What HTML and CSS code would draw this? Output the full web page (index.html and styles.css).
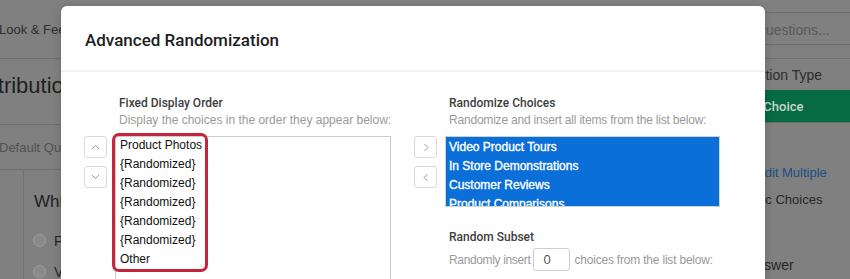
FILE: index.html
```html
<!DOCTYPE html>
<html lang="en">
<head>
<meta charset="utf-8">
<title>Advanced Randomization</title>
<link rel="stylesheet" href="styles.css">
</head>
<body>
<div class="app">
  <div class="bg-left">
    <div class="bl-tab">Look &amp; Feel</div>
    <div class="bl-title">Distribution</div>
    <div class="bl-sub">Default Question</div>
    <div class="bl-body">
      <div class="bl-side">l</div>
      <div class="bl-q">
        <div class="q-text">Which</div>
        <div class="q-opt"><span class="radio"></span>Product</div>
        <div class="q-opt"><span class="radio"></span>Video</div>
      </div>
    </div>
  </div>
  <div class="bg-right">
    <div class="br-top"></div>
    <div class="br-search"><span class="clip q1">Questions...</span></div>
    <div class="br-gap"></div>
    <div class="br-type"><span class="clip q2">Question Type</span></div>
    <div class="br-green"><span class="clip q3">Multiple Choice</span></div>
    <div class="br-edit"><span class="clip q4">Edit Multiple</span></div>
    <div class="br-auto"><span class="clip q5">Automatic Choices</span></div>
    <div class="br-ans"><span class="clip q6">Answer</span></div>
  </div>
</div>

<div class="modal">
  <div class="modal-header">
    <h1 class="modal-title">Advanced Randomization</h1>
  </div>
  <div class="modal-body">
    <section class="col">
      <div class="col-head">
        <h2 class="col-title">Fixed Display Order</h2>
        <p class="col-desc">Display the choices in the order they appear below:</p>
      </div>
      <div class="btns">
        <button class="btn" aria-label="Move up"><svg width="9" height="6" viewBox="0 0 9 6"><path d="M1 5 L4.5 1.5 L8 5" fill="none" stroke="#9a9a9a" stroke-width="1"/></svg></button>
        <button class="btn" aria-label="Move down"><svg width="9" height="6" viewBox="0 0 9 6"><path d="M1 1 L4.5 4.5 L8 1" fill="none" stroke="#9a9a9a" stroke-width="1"/></svg></button>
      </div>
      <div class="list list-fixed">
        <div class="highlight">
          <div class="item">Product Photos</div>
          <div class="item">{Randomized}</div>
          <div class="item">{Randomized}</div>
          <div class="item">{Randomized}</div>
          <div class="item">{Randomized}</div>
          <div class="item">{Randomized}</div>
          <div class="item">Other</div>
        </div>
      </div>
    </section>
    <section class="col col-right">
      <div class="col-head">
        <h2 class="col-title">Randomize Choices</h2>
        <p class="col-desc">Randomize and insert all items from the list below:</p>
      </div>
      <div class="btns">
        <button class="btn" aria-label="Move right"><svg width="6" height="9" viewBox="0 0 6 9"><path d="M1.5 1 L5 4.5 L1.5 8" fill="none" stroke="#9a9a9a" stroke-width="1"/></svg></button>
        <button class="btn" aria-label="Move left"><svg width="6" height="9" viewBox="0 0 6 9"><path d="M4.5 1 L1 4.5 L4.5 8" fill="none" stroke="#9a9a9a" stroke-width="1"/></svg></button>
      </div>
      <div class="right-stack">
        <div class="list list-rand">
          <div class="item sel">Video Product Tours</div>
          <div class="item sel">In Store Demonstrations</div>
          <div class="item sel">Customer Reviews</div>
          <div class="item sel">Product Comparisons</div>
        </div>
        <h2 class="col-title subset-title">Random Subset</h2>
        <p class="subset-row"><span class="lead">Randomly insert</span><span class="num">0</span> choices from the list below:</p>
      </div>
    </section>
  </div>
</div>
</body>
</html>
```

FILE: styles.css
```css
* { box-sizing: border-box; }
html, body { margin: 0; padding: 0; }
body {
  width: 850px;
  height: 279px;
  overflow: hidden;
  position: relative;
  background: #808080;
  font-family: "Liberation Sans", Arial, sans-serif;
}

/* ---------- dimmed background app ---------- */
.app {
  display: flex;
  justify-content: space-between;
  width: 850px;
  height: 279px;
}
.bg-left {
  width: 220px;
  color: #2c2c2c;
}
.bl-tab {
  height: 59px;
  padding-top: 22px;
  font-size: 13px;
  text-indent: -1px;
  color: #2e2e2e;
  border-bottom: 1px solid #6e6e6e;
}
.bl-title {
  height: 66px;
  padding-top: 14px;
  font-size: 22px;
  text-indent: -34px;
  color: #1f1f1f;
  white-space: nowrap;
  border-bottom: 1px solid #6e6e6e;
}
.bl-sub {
  height: 45px;
  padding-top: 15px;
  font-size: 13px;
  color: #525252;
  text-indent: -1px;
  border-bottom: 1px solid #6e6e6e;
}
.bl-body {
  display: flex;
  height: 120px;
}
.bl-side {
  width: 24px;
  border-right: 1px solid #727272;
  font-size: 15px;
  padding-top: 21px;
  text-indent: -3px;
  color: #222;
}
.bl-q {
  padding: 22px 0 0 10px;
}
.q-text {
  font-size: 17px;
  color: #222;
  height: 33px;
}
.q-opt {
  display: flex;
  align-items: center;
  gap: 8px;
  font-size: 14px;
  color: #222;
  height: 31px;
  margin-left: -1px;
}
.radio {
  width: 13px;
  height: 13px;
  border-radius: 50%;
  border: 1px solid #9c9c9c;
  background: #8a8a8a;
}

.bg-right {
  width: 85px;
  font-size: 13px;
}
.clip { white-space: nowrap; display: block; }
.br-top { height: 13px; border-bottom: 1px solid #6c6c6c; }
.br-search {
  height: 32px;
  padding-top: 9px;
  color: #5a5a5a;
  font-size: 14px;
  border-bottom: 1px solid #6c6c6c;
}
.q1 { text-indent: -10px; }
.br-gap { height: 14px; border-bottom: 1px solid #707070; }
.br-type {
  height: 31px;
  padding-top: 8px;
  color: #2b2b2b;
  font-size: 14px;
}
.q2 { text-indent: -33px; }
.br-green {
  height: 33px;
  background: #066a43;
  border-bottom: 1px solid #6a6a6a;
  color: #c6d6cd;
  padding-top: 9px;
  font-size: 13px;
  font-family: Roboto, "Liberation Sans", sans-serif;
  font-weight: 500;
}
.q3 { text-indent: -52px; }
.br-edit {
  height: 36px;
  margin-top: 42px;
  color: #1b4f86;
  font-size: 13px;
}
.q4 { text-indent: -9px; }
.br-auto {
  height: 65px;
  color: #272727;
  font-size: 13px;
  margin-top: -9px;
}
.q5 { text-indent: -51px; }
.br-ans {
  color: #272727;
  font-size: 14px;
}
.q6 { text-indent: -18px; }

/* ---------- modal ---------- */
.modal {
  position: absolute;
  left: 61px;
  top: 6px;
  width: 704px;
  height: 320px;
  background: #fff;
  border-radius: 6px;
  box-shadow: 0 2px 10px rgba(0, 0, 0, 0.18);
}
.modal-header {
  height: 66px;
  border-bottom: 2px solid #f1f1f1;
  display: flex;
  align-items: center;
  padding: 4px 0 0 24px;
}
.modal-title {
  margin: 0;
  font-family: Roboto, "Liberation Sans", sans-serif;
  font-weight: 500;
  font-size: 17px;
  color: #1e1e1e;
}
.modal-body {
  display: flex;
  align-items: flex-start;
  gap: 24px;
  padding: 23px 0 0 23px;
}
.col {
  width: 306px;
  display: grid;
  grid-template-columns: 23px 1fr;
  column-gap: 8px;
  align-items: start;
  align-content: start;
}
.col-head {
  grid-column: 2;
  padding-left: 4px;
  margin-bottom: 8px;
}
.col-title {
  margin: 0;
  font-family: Roboto, "Liberation Sans", sans-serif;
  font-weight: 500;
  font-size: 12px;
  line-height: 16px;
  color: #3d3d3d;
}
.col-desc {
  margin: 1px 0 0;
  font-size: 12px;
  line-height: 16px;
  color: #9a9a9a;
  white-space: nowrap;
}
.col-right .col-desc { letter-spacing: -0.2px; }
.btns {
  grid-column: 1;
  display: flex;
  flex-direction: column;
  gap: 8px;
}
.btn {
  width: 23px;
  height: 22px;
  padding: 0;
  margin: 0;
  border: 1px solid #d9d9d9;
  border-radius: 3px;
  background: #fff;
  display: flex;
  align-items: center;
  justify-content: center;
}
.list {
  border: 1px solid #cccccc;
  font-size: 12px;
  line-height: 19px;
}
.item { white-space: nowrap; }
.list-fixed {
  height: 200px;
  color: #111;
}
.highlight {
  width: fit-content;
  margin: -4px 0 0 -4px;
  border: 3px solid #c4253c;
  border-radius: 7px;
  padding: 0 3px 0 5px;
}
.right-stack { display: flex; flex-direction: column; }
.list-rand {
  height: 71px;
  overflow: hidden;
  background: #0b6fd9;
  border-color: #cbd6cb;
  color: #fff;
  padding-left: 3px;
  padding-top: 0.5px;
}
.sel {
  -webkit-text-stroke: 0.35px #fff;
}
.subset-title {
  margin-top: 22px;
  padding-left: 4px;
}
.subset-row {
  margin: 3px 0 0;
  padding-left: 4px;
  font-size: 12px;
  letter-spacing: -0.2px;
  color: #9a9a9a;
  display: flex;
  align-items: center;
  white-space: nowrap;
}
.lead { letter-spacing: -0.35px; }
.num {
  display: inline-block;
  width: 37px;
  height: 23px;
  border: 1px solid #cfcfcf;
  border-radius: 3px;
  margin: 0 4px 0 3px;
  padding: 4px 0 0 9px;
  font-size: 13px;
  line-height: 14px;
  letter-spacing: 0;
  color: #555;
}
```
